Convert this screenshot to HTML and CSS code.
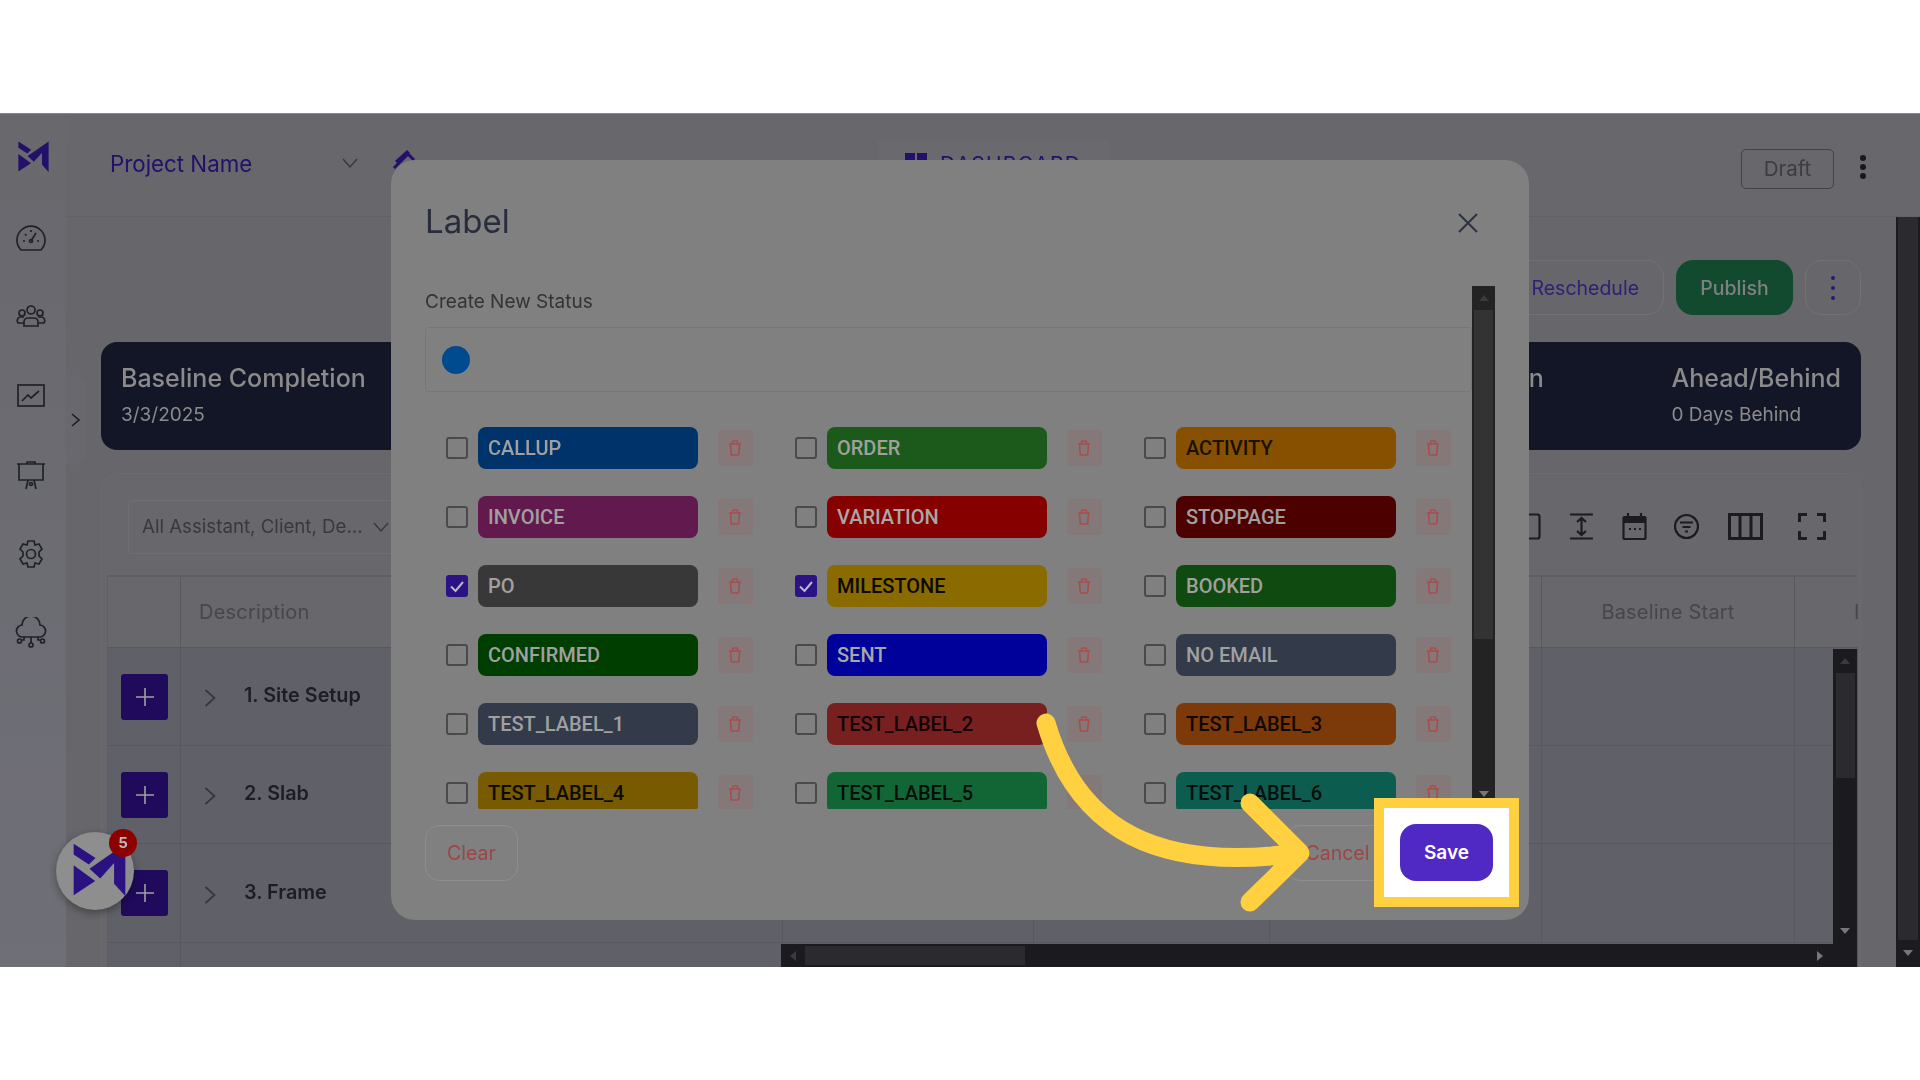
FILE: index.html
```html
<!DOCTYPE html>
<html lang="en">

<head>
    <meta charset="UTF-8">
    <meta name="viewport" content="width=device-width, initial-scale=1.0">
    <title>Label</title>
    <link rel="stylesheet" href="styles.css">
</head>

<body>
    <div class="shot">
        <div class="app">
            <aside class="side">
                <svg class="logo" viewBox="0 0 160 160"><use href="#mark"></use></svg>
                <svg class="nav-ico" viewBox="0 0 32 32"><path d="M6 28a14 14 0 1 1 20 0z" /><path d="M16 19l5-8M8 19h2M22 19h2M10 12l1.500 1.500M16 8v2" /><circle cx="16" cy="19" r="1.500" /></svg>
                <svg class="nav-ico" viewBox="0 0 32 32"><circle cx="16" cy="9" r="4" /><circle cx="7" cy="12" r="3" /><circle cx="25" cy="12" r="3" /><path d="M9 25v-4a4 4 0 0 1 4-4h6a4 4 0 0 1 4 4v4zM9 22H3c-2-3 0-6 3-6h3M23 22h6c2-3 0-6-3-6h-3" /></svg>
                <svg class="nav-ico" viewBox="0 0 32 32"><rect x="3" y="5" width="26" height="21" /><path d="M7 21l6-6 3 3 8-7" /></svg>
                <svg class="nav-ico" viewBox="0 0 32 32"><path d="M2 5h28M4 5v16h24V5M12 5V3h8v2M11 30l2-9M21 30l-2-9" /><circle cx="16" cy="25" r="1.500" /></svg>
                <svg class="nav-ico" viewBox="0 0 32 32"><path d="M13 3h6l1 4 4-1 3 5-3 3v4l3 3-3 5-4-1-1 4h-6l-1-4-4 1-3-5 3-3v-4l-3-3 3-5 4 1z" /><circle cx="16" cy="16" r="4.500" /></svg>
                <svg class="nav-ico" viewBox="0 0 32 32"><path d="M8 20a6 6 0 0 1-1-12 9 9 0 0 1 18 0 6 6 0 0 1-1 12zM16 20v6M9 20v3H7M23 20v3h2" /><circle cx="16" cy="28" r="2" /><circle cx="4.500" cy="24" r="2" /><circle cx="27.500" cy="24" r="2" /></svg>
                <div class="side-tab">
                    <svg class="chev" viewBox="0 0 12 16"><path d="M2 2l7 6-7 6" /></svg>
                </div>
            </aside>

            <div class="main">
                <header class="top">
                    <div class="project">
                        <span>Project Name</span>
                        <svg class="chev-down" viewBox="0 0 16 10"><path d="M1 1l7 8 7-8" /></svg>
                    </div>
                    <svg class="pencil" viewBox="0 0 24 24"><path d="M2 20L16 6l6 6M4 14L15 4l2 2" /></svg>
                    <div class="dash-tab">
                        <span class="dash-ico"><i></i><i></i></span>
                        <span>DASHBOARD</span>
                    </div>
                    <div class="draft">Draft</div>
                    <div class="dots"><i></i><i></i><i></i></div>
                </header>

                <div class="body">
                    <div class="content">
                        <div class="actions">
                            <button class="btn btn-outline">Reschedule</button>
                            <button class="btn btn-publish">Publish</button>
                            <button class="btn btn-more"><span class="dots dots-sm"><i></i><i></i><i></i></span></button>
                        </div>

                        <section class="banner">
                            <div>
                                <h2>Baseline Completion</h2>
                                <p>3/3/2025</p>
                            </div>
                            <h2 class="banner-mid">n</h2>
                            <div class="banner-end">
                                <h2>Ahead/Behind</h2>
                                <p>0 Days Behind</p>
                            </div>
                        </section>

                        <section class="card">
                            <div class="toolbar">
                                <div class="filter">
                                    <span>All Assistant, Client, De...</span>
                                    <svg class="chev-down" viewBox="0 0 16 10"><path d="M1 1l7 8 7-8" /></svg>
                                </div>
                                <div class="tools">
                                    <svg class="tool tool-w25" viewBox="0 0 25 27"><rect x="1.500" y="1.500" width="22" height="24" rx="2" /></svg>
                                    <svg class="tool tool-w23" viewBox="0 0 23 27"><path d="M0 1.500h23M0 25.500h23M11.500 5v17M7 9l4.500-4 4.500 4M7 18l4.500 4 4.500-4" /></svg>
                                    <svg class="tool tool-w25 tool-cal" viewBox="0 0 25 27"><path class="fill" d="M2 4h21a1 1 0 0 1 1 1v5H1V5a1 1 0 0 1 1-1z" /><rect x="1.500" y="4" width="22" height="22" rx="1" /><path d="M6 0v5M19 0v5M7 16h2M12 16h2M17 16h2" /></svg>
                                    <svg class="tool tool-w25" viewBox="0 0 25 27"><circle cx="12.500" cy="13.500" r="11.500" /><path d="M6 9.500h13M8.500 14h8M11 18.500h3" /></svg>
                                    <svg class="tool tool-w35 tool-bold" viewBox="0 0 35 27"><rect x="1.500" y="1.500" width="32" height="24" /><path d="M12 1v25M23 1v25" /></svg>
                                    <svg class="tool tool-w28 tool-bold tool-last" viewBox="0 0 28 27"><path d="M1.500 9V1.500H9M19 1.500h7.500V9M26.500 18v7.500H19M9 25.500H1.500V18" /></svg>
                                </div>
                            </div>

                            <div class="table">
                                <div class="cell head"></div>
                                <div class="cell head head-desc">Description</div>
                                <div class="cell head"></div>
                                <div class="cell head"></div>
                                <div class="cell head"></div>
                                <div class="cell head head-mid">Baseline Start</div>
                                <div class="cell head head-cut">I</div>

                                <div class="cell"><span class="plus"><svg viewBox="0 0 18 18"><path d="M9 0v18M0 9h18" /></svg></span></div>
                                <div class="cell task"><svg class="chev-task" viewBox="0 0 12 20"><path d="M1.500 2l9 8-9 8" /></svg>1. Site Setup</div>
                                <div class="cell"></div><div class="cell"></div><div class="cell"></div><div class="cell"></div><div class="cell"></div>

                                <div class="cell"><span class="plus"><svg viewBox="0 0 18 18"><path d="M9 0v18M0 9h18" /></svg></span></div>
                                <div class="cell task"><svg class="chev-task" viewBox="0 0 12 20"><path d="M1.500 2l9 8-9 8" /></svg>2. Slab</div>
                                <div class="cell"></div><div class="cell"></div><div class="cell"></div><div class="cell"></div><div class="cell"></div>

                                <div class="cell"><span class="plus"><svg viewBox="0 0 18 18"><path d="M9 0v18M0 9h18" /></svg></span></div>
                                <div class="cell task"><svg class="chev-task" viewBox="0 0 12 20"><path d="M1.500 2l9 8-9 8" /></svg>3. Frame</div>
                                <div class="cell"></div><div class="cell"></div><div class="cell"></div><div class="cell"></div><div class="cell"></div>

                                <div class="cell"></div><div class="cell"></div><div class="cell"></div><div class="cell"></div><div class="cell"></div><div class="cell"></div><div class="cell"></div>
                            </div>

                            <div class="table-vbar">
                                <span class="arr arr-up"></span>
                                <span class="table-vthumb"></span>
                                <span class="arr arr-down"></span>
                            </div>
                            <div class="table-hbar">
                                <span class="arr arr-left"></span>
                                <span class="table-hthumb"></span>
                                <span class="arr arr-right"></span>
                            </div>
                        </section>
                    </div>

                    <div class="page-bar">
                        <span class="page-thumb"></span>
                        <span class="arr arr-down"></span>
                    </div>
                </div>
            </div>

            <div class="fab">
                <svg class="fab-logo" viewBox="0 0 160 160"><use href="#mark"></use></svg>
                <span class="fab-badge">5</span>
            </div>
        </div>

        <div class="modal">
            <div class="modal-head soft">
                <h1>Label</h1>
                <svg class="close" viewBox="0 0 20 20"><path d="M1 1l18 18M19 1L1 19" /></svg>
            </div>

            <div class="modal-main soft">
                <div class="modal-form">
                    <label class="form-label">Create New Status</label>
                    <div class="status-input"><span class="dot"></span></div>
                    <div class="label-grid">
                        <div class="label-row"><span class="check"></span><span class="pill c-callup">CALLUP</span><span class="trash"><svg viewBox="0 0 14 16"><use href="#bin"></use></svg></span></div>
                        <div class="label-row"><span class="check"></span><span class="pill c-order">ORDER</span><span class="trash"><svg viewBox="0 0 14 16"><use href="#bin"></use></svg></span></div>
                        <div class="label-row"><span class="check"></span><span class="pill c-activity">ACTIVITY</span><span class="trash"><svg viewBox="0 0 14 16"><use href="#bin"></use></svg></span></div>

                        <div class="label-row"><span class="check"></span><span class="pill c-invoice">INVOICE</span><span class="trash"><svg viewBox="0 0 14 16"><use href="#bin"></use></svg></span></div>
                        <div class="label-row"><span class="check"></span><span class="pill c-variation">VARIATION</span><span class="trash"><svg viewBox="0 0 14 16"><use href="#bin"></use></svg></span></div>
                        <div class="label-row"><span class="check"></span><span class="pill c-stoppage">STOPPAGE</span><span class="trash"><svg viewBox="0 0 14 16"><use href="#bin"></use></svg></span></div>

                        <div class="label-row"><span class="check on"><svg viewBox="0 0 22 22"><path d="M5 11.500l4.500 4.500L17 7" /></svg></span><span class="pill c-po">PO</span><span class="trash"><svg viewBox="0 0 14 16"><use href="#bin"></use></svg></span></div>
                        <div class="label-row"><span class="check on"><svg viewBox="0 0 22 22"><path d="M5 11.500l4.500 4.500L17 7" /></svg></span><span class="pill c-milestone">MILESTONE</span><span class="trash"><svg viewBox="0 0 14 16"><use href="#bin"></use></svg></span></div>
                        <div class="label-row"><span class="check"></span><span class="pill c-booked">BOOKED</span><span class="trash"><svg viewBox="0 0 14 16"><use href="#bin"></use></svg></span></div>

                        <div class="label-row"><span class="check"></span><span class="pill c-confirmed">CONFIRMED</span><span class="trash"><svg viewBox="0 0 14 16"><use href="#bin"></use></svg></span></div>
                        <div class="label-row"><span class="check"></span><span class="pill c-sent">SENT</span><span class="trash"><svg viewBox="0 0 14 16"><use href="#bin"></use></svg></span></div>
                        <div class="label-row"><span class="check"></span><span class="pill c-slate">NO EMAIL</span><span class="trash"><svg viewBox="0 0 14 16"><use href="#bin"></use></svg></span></div>

                        <div class="label-row"><span class="check"></span><span class="pill c-slate">TEST_LABEL_1</span><span class="trash"><svg viewBox="0 0 14 16"><use href="#bin"></use></svg></span></div>
                        <div class="label-row"><span class="check"></span><span class="pill c-test2">TEST_LABEL_2</span><span class="trash"><svg viewBox="0 0 14 16"><use href="#bin"></use></svg></span></div>
                        <div class="label-row"><span class="check"></span><span class="pill c-test3">TEST_LABEL_3</span><span class="trash"><svg viewBox="0 0 14 16"><use href="#bin"></use></svg></span></div>

                        <div class="label-row"><span class="check"></span><span class="pill c-test4">TEST_LABEL_4</span><span class="trash"><svg viewBox="0 0 14 16"><use href="#bin"></use></svg></span></div>
                        <div class="label-row"><span class="check"></span><span class="pill c-test5">TEST_LABEL_5</span><span class="trash"><svg viewBox="0 0 14 16"><use href="#bin"></use></svg></span></div>
                        <div class="label-row"><span class="check"></span><span class="pill c-test6">TEST_LABEL_6</span><span class="trash"><svg viewBox="0 0 14 16"><use href="#bin"></use></svg></span></div>
                    </div>
                </div>
                <div class="modal-bar">
                    <span class="arr arr-up"></span>
                    <span class="modal-thumb"></span>
                    <span class="arr arr-down"></span>
                </div>
            </div>

            <div class="modal-foot">
                <button class="btn-line soft">Clear</button>
                <button class="btn-line btn-cancel soft">Cancel</button>
                <div class="save-spot"><button class="btn-save">Save</button></div>
            </div>
        </div>

        <!-- tutorial arrow pointing at Save -->
        <svg class="pointer" viewBox="0 0 1920 1080">
            <path d="M1046 723C1078 832 1160 872 1298 853M1250 803l50 50-50 49" />
        </svg>
    </div>

    <svg class="defs" width="0" height="0">
        <symbol id="mark" viewBox="0 0 160 160">
            <path d="M2 2l66 43-20 20L2 35z" />
            <path d="M2 67l65 48-65 43z" />
            <path d="M50 78L158 2v158l-34-37V60L82 107z" />
        </symbol>
        <symbol id="bin" viewBox="0 0 14 16">
            <path d="M1 4h12M4.500 4V2a1 1 0 0 1 1-1h3a1 1 0 0 1 1 1v2M2.500 4l.7 10a1 1 0 0 0 1 1h5.600a1 1 0 0 0 1-1l.7-10" fill="none" stroke="currentColor" stroke-width="1.500" />
        </symbol>
    </svg>
</body>

</html>
```

FILE: styles.css
```css
* {
    box-sizing: border-box;
    margin: 0;
    padding: 0;
}

body {
    background: #fff;
    font-family: "Inter", "Noto Sans", sans-serif;
    overflow: hidden;
}

button {
    font-family: inherit;
}

.defs {
    position: absolute;
}

.shot {
    position: relative;
    width: 1920px;
    height: 1080px;
    padding: 113px 0;
}

.app {
    position: relative;
    display: flex;
    height: 854px;
    overflow: hidden;
    background: #67666b;
    border-top: 1px solid #8a8a8a;
    filter: blur(0.5px);
}

/* sidebar */
.side {
    position: relative;
    flex: 0 0 66px;
    display: flex;
    flex-direction: column;
    align-items: center;
    padding-right: 5px;
    background: linear-gradient(#69686d, #6f6f78);
}

.logo {
    width: 31px;
    height: 31px;
    margin: 27px 0 50px 5px;
    fill: #22106a;
}

.nav-ico {
    width: 32px;
    height: 32px;
    margin-bottom: 47px;
    fill: none;
    stroke: #202129;
    stroke-width: 1.700;
}

.side-tab {
    position: absolute;
    left: 66px;
    top: 261px;
    z-index: 1;
    width: 20px;
    height: 90px;
    display: flex;
    align-items: center;
    justify-content: center;
    background: #69686e;
    border-radius: 0 12px 12px 0;
}

.chev {
    width: 12px;
    height: 16px;
    fill: none;
    stroke: #1d1d22;
    stroke-width: 1.600;
}

/* top bar */
.main {
    flex: 1;
    min-width: 0;
    display: flex;
    flex-direction: column;
}

.top {
    flex: 0 0 103px;
    display: flex;
    align-items: flex-start;
    padding: 26px 54px 0 44px;
    background: #68676c;
    border-bottom: 1px solid #626166;
}

.project {
    width: 248px;
    height: 44px;
    display: flex;
    align-items: center;
    justify-content: space-between;
    padding-top: 2px;
    color: #22106a;
    font-size: 22.300px;
}

.chev-down {
    flex: 0 0 16px;
    width: 16px;
    height: 10px;
    fill: none;
    stroke: #37363b;
    stroke-width: 1.300;
}

.pencil {
    width: 24px;
    height: 24px;
    margin: 8px 0 0 34px;
    fill: none;
    stroke: #22106a;
    stroke-width: 3;
}

.dash-tab {
    display: flex;
    gap: 13px;
    width: 232px;
    height: 40px;
    margin: 0 0 0 461px;
    padding: 13px 0 0 28px;
    background: #6a696e;
    color: #22106a;
    font-size: 21px;
    line-height: 24px;
    letter-spacing: 1.200px;
}

.dash-ico {
    display: flex;
    gap: 2px;
}

.dash-ico i {
    width: 10px;
    height: 20px;
    background: #22106a;
}

.draft {
    width: 93px;
    height: 40px;
    margin-left: auto;
    margin-top: 9px;
    border: 1.500px solid #434247;
    border-radius: 5px;
    color: #3c3c41;
    font-size: 20.500px;
    line-height: 37px;
    text-align: center;
}

.dots {
    display: flex;
    flex-direction: column;
    gap: 3px;
    width: 6px;
    margin: 15px 0 0 26px;
}

.dots i {
    width: 6px;
    height: 6px;
    border-radius: 50%;
    background: #17171c;
}

.dots-sm {
    margin: 0;
    gap: 6px;
    width: 4px;
}

.dots-sm i {
    width: 4px;
    height: 4px;
    background: #2a1878;
}

/* page body */
.body {
    flex: 1;
    min-height: 0;
    display: flex;
}

.content {
    flex: 1;
    min-width: 0;
    padding: 43px 35px 0;
    background: #67666b;
}

.actions {
    display: flex;
    justify-content: flex-end;
    gap: 12px;
    height: 55px;
}

.btn {
    height: 55px;
    border-radius: 17px;
    font-size: 19.500px;
    border: 1px solid #727179;
    background: transparent;
}

.btn-outline {
    width: 200px;
    color: #2f2076;
    text-align: right;
    padding-right: 24px;
}

.btn-publish {
    width: 117px;
    background: #114a2f;
    border-color: #114a2f;
    color: #808080;
    font-weight: 500;
}

.btn-more {
    width: 56px;
    display: flex;
    align-items: center;
    justify-content: center;
}

.banner {
    display: flex;
    height: 108px;
    margin-top: 27px;
    padding: 20px 20px 0;
    background: #131627;
    border-radius: 16px;
    color: #8b8b8b;
}

.banner h2 {
    font-size: 25px;
    font-weight: 500;
    line-height: 32px;
}

.banner p {
    margin-top: 9px;
    font-size: 19px;
    line-height: 24px;
}

.banner-mid {
    margin-left: 1163px;
}

.banner-end {
    margin-left: auto;
}

/* card with the table */
.card {
    position: relative;
    height: 494px;
    margin-top: 23px;
    padding: 0 4px 0 5px;
    background: #68676c;
    border: 1px solid #6c6b70;
    border-bottom: 0;
    border-radius: 16px 16px 0 0;
    overflow: hidden;
}

.toolbar {
    display: flex;
    justify-content: space-between;
    align-items: center;
    height: 103px;
    padding: 2px 30px 0 21px;
}

.filter {
    width: 300px;
    height: 54px;
    display: flex;
    align-items: center;
    gap: 10px;
    padding: 0 0 0 13px;
    border: 1px solid #6f6e74;
    border-radius: 4px;
    color: #39383d;
    font-size: 18.700px;
    white-space: nowrap;
}

.tools {
    display: flex;
    align-items: center;
    gap: 29px;
}

.tool {
    height: 27px;
    fill: none;
    stroke: #1b1b20;
    stroke-width: 2.200;
}

.tool .fill {
    fill: #1b1b20;
    stroke: none;
}

.tool-w23 { width: 23px; }
.tool-w25 { width: 25px; }
.tool-w28 { width: 28px; }
.tool-w35 { width: 35px; }

.tool-cal {
    margin-right: -2px;
}

.tool-bold {
    stroke-width: 3;
}

.tool-last {
    margin-left: 6px;
}

.table {
    display: grid;
    grid-template-columns: 73px 602px 251px 236px 272px 253px 63px;
    grid-template-rows: 71px 98px 98px 99px 60px;
    border-top: 2px solid #5f5e64;
    border-left: 1px solid #5f5e64;
    width: 1750px;
    background: #606068;
    margin-top: -2px;
}

.cell {
    display: flex;
    align-items: center;
    border-right: 1px solid #58585f;
    border-bottom: 1px solid #58585f;
    overflow: hidden;
    white-space: nowrap;
}

.head {
    background: #68676c;
    color: #47464c;
    font-size: 20px;
    letter-spacing: 0.200px;
}

.head-desc {
    padding-left: 18px;
}

.head-mid {
    justify-content: center;
}

.head-cut {
    padding-left: 59px;
    border-right: 0;
    overflow: visible;
}

.plus {
    display: flex;
    align-items: center;
    justify-content: center;
    width: 47px;
    height: 46px;
    margin-left: 13px;
    border-radius: 3px;
    background: #1f0a5c;
}

.plus svg {
    width: 18px;
    height: 18px;
    fill: none;
    stroke: #a0a0a0;
    stroke-width: 1.600;
}

.task {
    padding: 0 0 3px 23px;
    color: #1d1d23;
    font-size: 19.800px;
    font-weight: 600;
}

.chev-task {
    width: 12px;
    height: 20px;
    margin: 6px 28px 0 0;
    fill: none;
    stroke: #37363b;
    stroke-width: 1.700;
}

/* scrollbars */
.arr {
    display: block;
    width: 0;
    height: 0;
    border-style: solid;
    border-color: transparent;
}

.arr-up {
    border-width: 0 5px 6px;
    border-bottom-color: #3b3b3f;
}

.arr-down {
    border-width: 6px 5px 0;
    border-top-color: #77777b;
}

.arr-left {
    border-width: 5px 6px 5px 0;
    border-right-color: #3b3b3f;
}

.arr-right {
    border-width: 5px 0 5px 6px;
    border-left-color: #77777b;
}

.table-vbar {
    position: absolute;
    right: 3px;
    top: 175px;
    bottom: 0;
    width: 24px;
    display: flex;
    flex-direction: column;
    align-items: center;
    padding-top: 9px;
    background: #1b1a1f;
}

.table-vthumb {
    width: 19px;
    height: 105px;
    margin-top: 9px;
    background: #2b2a2e;
}

.table-vbar .arr-down {
    margin-top: auto;
    margin-bottom: 33px;
}

.table-hbar {
    position: absolute;
    right: 3px;
    bottom: 0;
    width: 1076px;
    height: 23px;
    display: flex;
    align-items: center;
    padding: 0 34px 0 9px;
    background: #1b1a1f;
}

.table-hthumb {
    width: 220px;
    height: 19px;
    margin-left: 9px;
    background: #2b2a2e;
}

.table-hbar .arr-right {
    margin-left: auto;
}

.page-bar {
    flex: 0 0 24px;
    display: flex;
    flex-direction: column;
    align-items: center;
    background: #1c1c20;
}

.page-thumb {
    width: 20px;
    height: 723px;
    background: #2b2a2f;
}

.page-bar .arr-down {
    margin-top: 10px;
}

/* floating chat button */
.fab {
    position: absolute;
    left: 56px;
    top: 718px;
    z-index: 2;
    width: 78px;
    height: 78px;
    border-radius: 50%;
    background: #8e8e8e;
    box-shadow: 0 3px 8px rgba(0, 0, 0, 0.35);
}

.fab-logo {
    position: absolute;
    left: 17px;
    top: 11px;
    width: 53px;
    height: 53px;
    fill: #2b1280;
}

.fab-badge {
    position: absolute;
    left: 53px;
    top: -3px;
    width: 28px;
    height: 28px;
    border-radius: 50%;
    background: #8c0000;
    color: #b8b8b8;
    font-size: 15px;
    font-weight: 700;
    line-height: 28px;
    text-align: center;
}

/* label modal */
.modal {
    position: absolute;
    left: 391px;
    top: 160px;
    width: 1138px;
    height: 760px;
    display: flex;
    flex-direction: column;
    background: #808080;
    border-radius: 24px;
}

.soft {
    filter: blur(0.5px);
}

.modal-head {
    flex: 0 0 126px;
    display: flex;
    justify-content: space-between;
    padding: 38px 51px 0 34px;
}

.modal-head h1 {
    color: #282c3c;
    font-size: 33px;
    font-weight: 400;
    line-height: 46px;
}

.close {
    width: 20px;
    height: 20px;
    margin-top: 15px;
    fill: none;
    stroke: #2c3140;
    stroke-width: 2;
}

.modal-main {
    display: flex;
    height: 523px;
    padding-left: 34px;
}

.modal-form {
    flex: 0 0 1047px;
    height: 523px;
    overflow: hidden;
}

.form-label {
    display: block;
    margin-top: 3px;
    color: #333338;
    font-size: 19px;
    line-height: 26px;
}

.status-input {
    display: flex;
    align-items: center;
    height: 65px;
    margin-top: 12px;
    padding-left: 16px;
    border: 1px solid #777;
    border-radius: 3px;
}

.dot {
    width: 28px;
    height: 28px;
    border-radius: 50%;
    background: #004a90;
}

.label-grid {
    display: grid;
    grid-template-columns: repeat(3, 349px);
    grid-auto-rows: 42px;
    row-gap: 27px;
    margin-top: 35px;
    padding-left: 21px;
}

.label-row {
    display: flex;
    align-items: center;
}

.check {
    flex: 0 0 22px;
    height: 22px;
    margin-right: 10px;
    border: 2.500px solid #4a4a4a;
    border-radius: 3px;
}

.check.on {
    background: #2c1285;
    border: 0;
}

.check svg {
    display: block;
    width: 22px;
    height: 22px;
    fill: none;
    stroke: #b9b9c9;
    stroke-width: 2;
}

.pill {
    width: 219.500px;
    height: 42px;
    padding-left: 10px;
    border-radius: 8px;
    font-family: "Roboto", "Inter", sans-serif;
    font-size: 20px;
    font-weight: 500;
    line-height: 43px;
    color: #a0a0a0;
}

.c-callup { background: #00336a; }
.c-order { background: #1c5a1c; }
.c-activity { background: #865000; color: #1a1000; }
.c-invoice { background: #621a4e; }
.c-variation { background: #860000; color: #a8a8a8; }
.c-stoppage { background: #4c0000; }
.c-po { background: #383838; }
.c-milestone { background: #8a6b00; color: #0c0a02; }
.c-booked { background: #0f4a10; }
.c-confirmed { background: #003e00; }
.c-sent { background: #00009a; color: #a8a8a8; }
.c-slate { background: #333a4a; }
.c-test2 { background: #782020; color: #120404; }
.c-test3 { background: #7c3a0a; color: #120802; }
.c-test4 { background: #785a00; color: #0e0c02; }
.c-test5 { background: #126636; color: #020e08; }
.c-test6 { background: #0c5c50; color: #020e0c; }

.trash {
    flex: 0 0 35px;
    height: 36px;
    margin-left: 20px;
    display: flex;
    align-items: center;
    justify-content: center;
    background: #857878;
    border-radius: 3px;
    color: #a84c4c;
}

.trash svg {
    width: 14px;
    height: 16px;
}

.modal-bar {
    width: 23px;
    display: flex;
    flex-direction: column;
    align-items: center;
    padding-top: 9px;
    background: #232323;
}

.modal-thumb {
    width: 19px;
    height: 329px;
    margin-top: 9px;
    background: #333;
}

.modal-bar .arr-down {
    margin-top: auto;
    margin-bottom: 12px;
}

.modal-foot {
    display: flex;
    align-items: flex-start;
    padding: 16px 10px 0 34px;
}

.btn-line {
    height: 56px;
    border: 1px solid #8e8e8e;
    border-radius: 14px;
    background: transparent;
    color: #9c4545;
    font-size: 19.500px;
}

.btn-line:first-child {
    width: 93px;
}

.btn-cancel {
    width: 103px;
    margin-left: auto;
}

/* tutorial highlight */
.save-spot {
    position: relative;
    z-index: 2;
    margin: -27px 0 0 -15px;
    padding: 16px;
    border: 10px solid #ffd040;
    background: #fff;
}

.btn-save {
    display: block;
    width: 93px;
    height: 57px;
    border: 0;
    border-radius: 16px;
    background: #5029c4;
    color: #fff;
    font-size: 19px;
    font-weight: 600;
}

.pointer {
    position: absolute;
    left: 0;
    top: 0;
    width: 1920px;
    height: 1080px;
    fill: none;
    stroke: #ffd040;
    stroke-width: 19;
    stroke-linecap: round;
    stroke-linejoin: round;
    pointer-events: none;
}
```
